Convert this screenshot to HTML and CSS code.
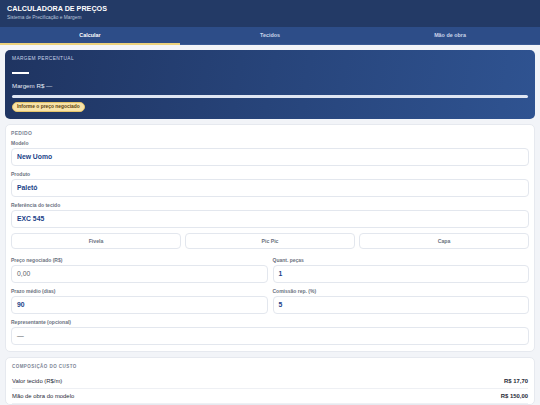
FILE: index.html
```html
<!DOCTYPE html>
<html lang="pt-BR">
<head>
<meta charset="utf-8">
<title>Calculadora de Preços</title>
<link rel="stylesheet" href="styles.css">
</head>
<body>
<header class="app-header">
  <div class="app-title">CALCULADORA DE PREÇOS</div>
  <div class="app-subtitle">Sistema de Precificação e Margem</div>
</header>
<nav class="tabs">
  <div class="tab active">Calcular</div>
  <div class="tab">Tecidos</div>
  <div class="tab">Mão de obra</div>
</nav>
<main class="content">
  <section class="margin-card">
    <div class="margin-label">MARGEM PERCENTUAL</div>
    <div class="margin-dash"></div>
    <div class="margin-value">Margem R$ —</div>
    <div class="margin-bar"></div>
    <div class="pill-row"><span class="pill">Informe o preço negociado</span></div>
  </section>

  <section class="card">
    <div class="card-title">PEDIDO</div>
    <div class="fields">
      <div class="field">
        <div class="field-label">Modelo</div>
        <div class="input">New Uomo</div>
      </div>
      <div class="field">
        <div class="field-label">Produto</div>
        <div class="input">Paletó</div>
      </div>
      <div class="field">
        <div class="field-label">Referência do tecido</div>
        <div class="input">EXC 545</div>
      </div>
      <div class="options">
        <div class="option">Fivela</div>
        <div class="option">Pic Pic</div>
        <div class="option">Capa</div>
      </div>
      <div class="grid-2">
        <div class="field">
          <div class="field-label">Preço negociado (R$)</div>
          <div class="input placeholder">0,00</div>
        </div>
        <div class="field">
          <div class="field-label">Quant. peças</div>
          <div class="input">1</div>
        </div>
      </div>
      <div class="grid-2">
        <div class="field">
          <div class="field-label">Prazo médio (dias)</div>
          <div class="input">90</div>
        </div>
        <div class="field">
          <div class="field-label">Comissão rep. (%)</div>
          <div class="input">5</div>
        </div>
      </div>
      <div class="field">
        <div class="field-label">Representante (opcional)</div>
        <div class="input placeholder">—</div>
      </div>
    </div>
  </section>

  <section class="card cost-card">
    <div class="card-title light">COMPOSIÇÃO DO CUSTO</div>
    <div class="cost-row"><span>Valor tecido (R$/m)</span><span class="cost-value">R$ 17,70</span></div>
    <div class="cost-row"><span>Mão de obra do modelo</span><span class="cost-value">R$ 150,00</span></div>
  </section>
</main>
</body>
</html>
```
FILE: styles.css
```css
* { box-sizing: border-box; }
html, body { margin: 0; padding: 0; }
body {
  width: 540px;
  background: #f2f4f8;
  font-family: "Liberation Sans", Arial, sans-serif;
  color: #1f2937;
  overflow: hidden;
}
.app-header {
  height: 27px;
  background: #233a66;
  padding: 5px 7px 0;
}
.app-title {
  color: #ffffff;
  font-weight: 700;
  font-size: 7.2px;
  line-height: 8px;
}
.app-subtitle {
  color: #b9c6dd;
  font-size: 4.8px;
  line-height: 6px;
  margin-top: 2px;
}
.tabs {
  display: grid;
  grid-template-columns: 1fr 1fr 1fr;
  height: 18px;
  background: #2d4d88;
  border-bottom: 1px solid #3a5a94;
}
.tab {
  text-align: center;
  font-size: 5.4px;
  font-weight: 700;
  line-height: 16px;
  color: #c9d5ea;
  border-bottom: 2px solid transparent;
}
.tab.active {
  color: #ffffff;
  border-bottom-color: #ecd27d;
}
.content {
  padding: 5px 5px 0;
  display: flex;
  flex-direction: column;
  gap: 5px;
}
.margin-card {
  border-radius: 5px;
  background: linear-gradient(100deg, #1f3461 0%, #27447a 50%, #2f5391 100%);
  padding: 5px 7px 7px;
}
.margin-label {
  color: #c6d2e8;
  font-size: 4.8px;
  letter-spacing: 0.4px;
  line-height: 7px;
}
.margin-dash {
  width: 17px;
  height: 2px;
  background: #ffffff;
  margin-top: 10px;
}
.margin-value {
  color: #e6ecf6;
  font-size: 6.2px;
  line-height: 8px;
  margin-top: 8px;
}
.margin-bar {
  height: 3px;
  border-radius: 2px;
  background: #dfe6f3;
  margin-top: 5px;
}
.pill-row {
  margin-top: 4px;
  display: flex;
}
.pill {
  display: inline-block;
  height: 9.5px;
  line-height: 8.5px;
  padding: 0 4px;
  border-radius: 5px;
  background: #f8e3a8;
  border: 0.5px solid #e6c56b;
  color: #5b3f0c;
  font-size: 4.9px;
  font-weight: 700;
}
.card {
  background: #ffffff;
  border: 1px solid #e6e9ef;
  border-radius: 5px;
  padding: 5px 5px 6px;
}
.card-title {
  color: #7b8494;
  font-size: 5px;
  font-weight: 700;
  letter-spacing: 0.35px;
  line-height: 6px;
}
.card-title.light {
  font-size: 4.5px;
  letter-spacing: 0.45px;
}
.fields {
  margin-top: 4px;
  display: flex;
  flex-direction: column;
  gap: 5px;
}
.field {
  display: flex;
  flex-direction: column;
  gap: 2px;
}
.field-label {
  color: #6b7280;
  font-size: 5px;
  font-weight: 600;
  line-height: 6px;
}
.input {
  height: 18px;
  border: 1px solid #e3e7ee;
  border-radius: 4px;
  background: #ffffff;
  padding-left: 5px;
  color: #213f88;
  font-size: 6.8px;
  font-weight: 700;
  line-height: 16px;
}
.input.placeholder {
  color: #5f636b;
  font-weight: 400;
}
.options {
  display: grid;
  grid-template-columns: 1fr 1fr 1fr;
  gap: 4px;
  margin-bottom: 3px;
}
.option {
  height: 16px;
  border: 1px solid #e3e7ee;
  border-radius: 4px;
  text-align: center;
  color: #6b7280;
  font-size: 5.2px;
  font-weight: 600;
  line-height: 14px;
}
.grid-2 {
  display: grid;
  grid-template-columns: 1fr 1fr;
  gap: 5px;
}
.cost-card {
  padding: 6px 6px 0;
}
.cost-card .card-title {
  margin-bottom: 4px;
}
.cost-row {
  display: flex;
  justify-content: space-between;
  font-size: 5.9px;
  line-height: 8px;
  padding: 3px 0;
  color: #1f2937;
  border-bottom: 1px solid #eef0f4;
}
.cost-value {
  font-weight: 700;
}
```
